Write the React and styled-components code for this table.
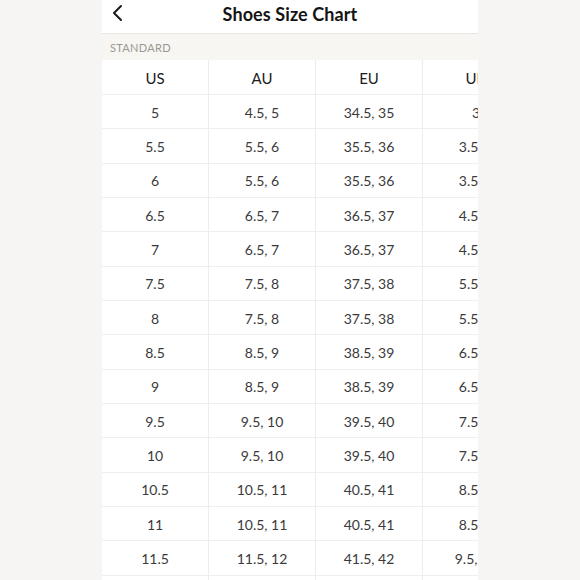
import React from 'react';
import styled, { createGlobalStyle } from 'styled-components';

const GlobalStyle = createGlobalStyle`
	html, body {
		margin: 0;
		padding: 0;
		background: #f6f5f3;
	}
	body {
		font-family: 'Lato', 'Noto Sans', sans-serif;
	}
`;

const Page = styled.div`
	width: 580px;
	height: 580px;
	display: flex;
	justify-content: center;
	overflow: hidden;
`;

const Screen = styled.div`
	width: 376px;
	height: 580px;
	background: #fff;
	overflow: hidden;
	display: flex;
	flex-direction: column;
`;

const Header = styled.header`
	height: 33px;
	flex: none;
	display: flex;
	align-items: center;
	justify-content: center;
	position: relative;
	border-bottom: 1px solid #e9e7e3;

	h1 {
		margin: 0;
		font-size: 18px;
		font-weight: 700;
		color: #141414;
		letter-spacing: 0.1px;
		line-height: 1;
		transform: translateY(-3px);
	}
`;

const Back = styled.button`
	position: absolute;
	left: 8px;
	top: 4px;
	background: none;
	border: none;
	padding: 0;
	display: flex;
	svg {
		display: block;
	}
`;

const Band = styled.div`
	height: 26px;
	flex: none;
	background: #f7f6f2;
	display: flex;
	align-items: center;
	padding-left: 8px;
	font-size: 11px;
	color: #9a9894;
	letter-spacing: 0.3px;
`;

const Table = styled.div`
	display: grid;
	grid-template-columns: repeat(4, 107px);
	width: 428px;
`;

const Cell = styled.div`
	box-sizing: border-box;
	height: ${p => (p.$head ? '35px' : '34.35px')};
	display: flex;
	align-items: center;
	justify-content: center;
	border-bottom: 1px solid #efefef;
	border-right: 1px solid #ececec;
	font-size: ${p => (p.$head ? '15px' : '14px')};
	color: ${p => (p.$head ? '#1c1c1c' : '#3a3a3a')};
	white-space: nowrap;
	padding-top: 1px;
`;

const heads = ['US', 'AU', 'EU', 'UK'];

const rows = [
	['5', '4.5, 5', '34.5, 35', '3'],
	['5.5', '5.5, 6', '35.5, 36', '3.5, 4'],
	['6', '5.5, 6', '35.5, 36', '3.5, 4'],
	['6.5', '6.5, 7', '36.5, 37', '4.5, 5'],
	['7', '6.5, 7', '36.5, 37', '4.5, 5'],
	['7.5', '7.5, 8', '37.5, 38', '5.5, 6'],
	['8', '7.5, 8', '37.5, 38', '5.5, 6'],
	['8.5', '8.5, 9', '38.5, 39', '6.5, 7'],
	['9', '8.5, 9', '38.5, 39', '6.5, 7'],
	['9.5', '9.5, 10', '39.5, 40', '7.5, 8'],
	['10', '9.5, 10', '39.5, 40', '7.5, 8'],
	['10.5', '10.5, 11', '40.5, 41', '8.5, 9'],
	['11', '10.5, 11', '40.5, 41', '8.5, 9'],
	['11.5', '11.5, 12', '41.5, 42', '9.5, 10'],
	['12', '11.5, 12', '41.5, 42', '9.5, 10'],
];

function App() {
	return (
		<>
			<GlobalStyle />
			<Page>
				<Screen>
					<Header>
						<Back aria-label='Back'>
							<svg width='16' height='18' viewBox='0 0 16 18'>
								<path d='M11 2 L4 9 L11 16' fill='none' stroke='#1a1a1a' strokeWidth='2' strokeLinecap='round' strokeLinejoin='round' />
							</svg>
						</Back>
						<h1>Shoes Size Chart</h1>
					</Header>
					<Band>STANDARD</Band>
					<Table>
						{heads.map(h => (
							<Cell $head key={h}>{h}</Cell>
						))}
						{rows.map((r, i) =>
							r.map((v, j) => <Cell key={i + '-' + j}>{v}</Cell>)
						)}
					</Table>
				</Screen>
			</Page>
		</>
	);
}

export default App;
